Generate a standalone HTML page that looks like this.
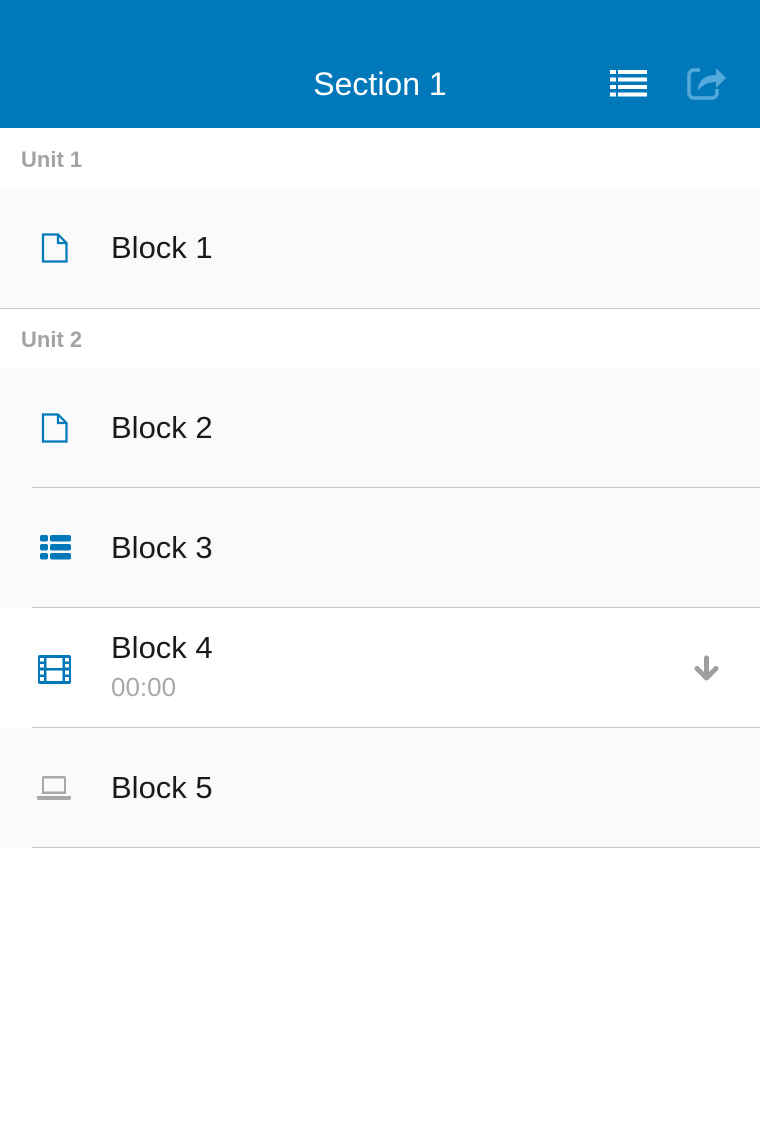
<!DOCTYPE html><html><head><style>
body{margin:0;width:760px;height:1136px;background:#fff;font-family:"Liberation Sans",sans-serif;position:relative;overflow:hidden}
.hd{position:absolute;left:0;top:0;width:760px;height:128px;background:#0078BA}
.t{position:absolute;left:0;width:760px;top:64px;text-align:center;color:#fff;font-size:32px;line-height:40px}
.u{position:absolute;left:21px;color:#a3a3a3;font-size:22px;line-height:30px;font-weight:bold}
.r{position:absolute;left:0;width:760px;height:120px}
.g{background:#fafafa}
.l{position:absolute;height:1px;background:#c8c8c8;right:0}
.n{position:absolute;left:111px;font-size:31px;color:#1a1a1a;line-height:38px}
svg{position:absolute}
</style></head><body>
<div class="hd"><div class="t">Section 1</div>
<svg style="left:610px;top:70px" width="37" height="27" viewBox="0 0 37 27" fill="#fff"><rect x="0" y="0" width="6" height="4"/><rect x="8" y="0" width="29" height="4"/><rect x="0" y="7.5" width="6" height="4"/><rect x="8" y="7.5" width="29" height="4"/><rect x="0" y="15" width="6" height="4"/><rect x="8" y="15" width="29" height="4"/><rect x="0" y="22.5" width="6" height="4"/><rect x="8" y="22.5" width="29" height="4"/></svg>
<svg style="left:686px;top:63px" width="42" height="38" viewBox="0 0 42 38" fill="none" stroke="#5fb0e0" stroke-width="3.5" opacity="0.9"><path d="M14 7H8a5 5 0 0 0-5 5v18a5 5 0 0 0 5 5h18a5 5 0 0 0 5-5v-4"/><path d="M12 28c0-10 6-16 18-16v-7l10 10-10 10v-6c-8 0-14 3-18 9z" fill="#5fb0e0" stroke="none"/></svg>
</div>
<div class="u" style="top:145px">Unit 1</div>
<div class="r g" style="top:188px"></div>
<div class="l" style="left:0;top:308px"></div>
<div class="u" style="top:325px">Unit 2</div>
<div class="r g" style="top:368px"></div>
<div class="r g" style="top:488px"></div>
<div class="r g" style="top:728px"></div>
<div class="l" style="left:32px;top:487px"></div>
<div class="l" style="left:32px;top:607px"></div>
<div class="l" style="left:32px;top:727px"></div>
<div class="l" style="left:32px;top:847px"></div>
<svg style="left:41px;top:233px" width="28" height="30" viewBox="0 0 28 30" fill="none" stroke="#0078BA" stroke-width="2.2"><path d="M2 1.5h15l8.5 8.5v18.5H2z"/><path d="M17 1.5v8.5h8.5"/></svg>
<div class="n" style="top:229px">Block 1</div>
<svg style="left:41px;top:413px" width="28" height="30" viewBox="0 0 28 30" fill="none" stroke="#0078BA" stroke-width="2.2"><path d="M2 1.5h15l8.5 8.5v18.5H2z"/><path d="M17 1.5v8.5h8.5"/></svg>
<div class="n" style="top:409px">Block 2</div>
<svg style="left:40px;top:535px" width="31" height="25" viewBox="0 0 31 25" fill="#0078BA"><rect x="0" y="0" width="8" height="6.5" rx="2"/><rect x="10" y="0" width="21" height="6.5" rx="2"/><rect x="0" y="9" width="8" height="6.5" rx="2"/><rect x="10" y="9" width="21" height="6.5" rx="2"/><rect x="0" y="18" width="8" height="6.5" rx="2"/><rect x="10" y="18" width="21" height="6.5" rx="2"/></svg>
<div class="n" style="top:529px">Block 3</div>
<svg style="left:38px;top:655px" width="33" height="29" viewBox="0 0 33 29" fill="#0078BA"><path fill-rule="evenodd" d="M2 0h29a2 2 0 0 1 2 2v25a2 2 0 0 1-2 2H2a2 2 0 0 1-2-2V2a2 2 0 0 1 2-2zM2 3v3.5h4V3zM2 9v3.5h4V9zM2 15.5v4h4v-4zM2 22v4h4v-4zM27 3v3.5h4V3zM27 9v3.5h4V9zM27 15.5v4h4v-4zM27 22v4h4v-4zM8.5 3v10h16V3zM8.5 15.5v10.5h16V15.5z"/></svg>
<div class="n" style="top:629px">Block 4</div>
<div style="position:absolute;left:111px;top:672px;font-size:26px;color:#a8a8a8">00:00</div>
<svg style="left:694px;top:655px" width="25" height="27" viewBox="0 0 25 27" fill="none" stroke="#9e9e9e" stroke-width="5" stroke-linecap="round" stroke-linejoin="round"><path d="M12.5 3v20M3 13.5l9.5 9.5 9.5-9.5"/></svg>
<svg style="left:37px;top:776px" width="34" height="25" viewBox="0 0 34 25" fill="#a8a8a8"><path fill-rule="evenodd" d="M7 0h20a2 2 0 0 1 2 2v16H5V2a2 2 0 0 1 2-2zm0 2.5v13h20v-13z"/><path d="M0 20h34v2a2 2 0 0 1-2 2H2a2 2 0 0 1-2-2z"/></svg>
<div class="n" style="top:769px">Block 5</div>
</body></html>
